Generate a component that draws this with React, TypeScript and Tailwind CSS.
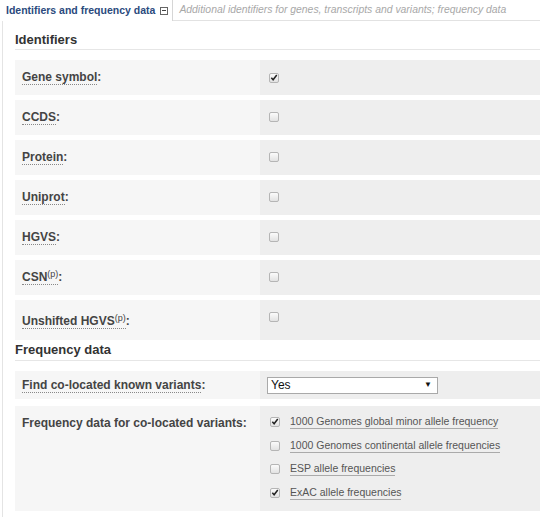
import React from 'react';

const Check: React.FC<{ checked?: boolean }> = ({ checked }) => (
  <span className="inline-flex h-[10px] w-[10px] items-center justify-center rounded-[2px] border border-[#b5b5b5] bg-gradient-to-b from-[#fbfbfb] to-[#e2e2e2]">
    {checked && (
      <svg width="9" height="9" viewBox="0 0 9 9" className="-mt-[1px]">
        <path d="M1.5 4.8 L3.5 7 L7.6 1.6" fill="none" stroke="#222" strokeWidth="1.7" />
      </svg>
    )}
  </span>
);

const Label: React.FC<{ text: string; sup?: boolean }> = ({ text, sup }) => (
  <span className="text-[12px] font-bold text-[#444]">
    <span className="border-b border-dotted border-[#888]">
      {text}
      {sup && <sup className="text-[9px] font-normal">(p)</sup>}
    </span>
    :
  </span>
);

const identifiers = [
  { text: 'Gene symbol', checked: true },
  { text: 'CCDS' },
  { text: 'Protein' },
  { text: 'Uniprot' },
  { text: 'HGVS' },
  { text: 'CSN', sup: true },
  { text: 'Unshifted HGVS', sup: true, tall: true },
];

const freqOptions = [
  { text: '1000 Genomes global minor allele frequency', checked: true },
  { text: '1000 Genomes continental allele frequencies' },
  { text: 'ESP allele frequencies' },
  { text: 'ExAC allele frequencies', checked: true },
];

export default function App() {
  return (
    <div className="h-[517px] w-[540px] overflow-hidden bg-white" style={{ fontFamily: '"Liberation Sans", Arial, sans-serif' }}>
      {/* tabs */}
      <div className="flex h-[21px] items-stretch">
        <div className="flex items-center gap-[5px] whitespace-nowrap border-r border-[#d6d6d6] pl-[6px] pr-[4px] text-[10.5px] font-bold text-[#2b4a7d]">
          <span>Identifiers and frequency data</span>
          <span className="inline-flex h-[8px] w-[8px] items-center justify-center border border-[#666] bg-white">
            <span className="h-[1px] w-[4px] bg-[#444]" />
          </span>
        </div>
        <div className="flex min-w-0 flex-1 items-center overflow-hidden whitespace-nowrap border-b border-[#e2e2e2] pl-[6px] text-[10.4px] italic text-[#a8a8a8]">
          Additional identifiers for genes, transcripts and variants; frequency data
        </div>
      </div>

      <div className="ml-[2px] h-full border-l border-[#e4e4e4] pl-[12px]">
        {/* Identifiers */}
        <div className="flex h-[29px] items-end border-b border-[#e6e6e6] pb-0 text-[13px] font-bold text-[#333]">
          Identifiers
        </div>
        <div className="mt-[10px] flex flex-col gap-[5px]">
          {identifiers.map((r) => (
            <div key={r.text} className={`grid grid-cols-[245px_1fr] ${r.tall ? 'h-[40px]' : 'h-[35px]'}`}>
              <div className={`bg-[#f6f6f6] pl-[7px] ${r.tall ? 'pt-[8px]' : 'pt-[4px]'}`}>
                <Label text={r.text} sup={r.sup} />
              </div>
              <div className="bg-[#eeeeee] pl-[9px] pt-[5px]">
                <Check checked={r.checked} />
              </div>
            </div>
          ))}
        </div>

        {/* Frequency data */}
        <div className="flex h-[21px] items-end border-b border-[#e6e6e6] pb-[1px] text-[13px] font-bold text-[#333]">
          Frequency data
        </div>
        <div className="mt-[10px] grid h-[28px] grid-cols-[245px_1fr]">
          <div className="flex items-center bg-[#f6f6f6] pl-[7px]">
            <Label text="Find co-located known variants" />
          </div>
          <div className="flex items-center bg-[#eeeeee] pl-[7px]">
            <div className="flex h-[17px] w-[171px] items-center justify-between border border-[#a9a9a9] bg-white pl-[3px] pr-[5px] text-[12px] text-[#111]">
              <span>Yes</span>
              <span className="text-[8px]">▼</span>
            </div>
          </div>
        </div>
        <div className="mt-[7px] grid h-[105px] grid-cols-[245px_1fr]">
          <div className="bg-[#f6f6f6] pl-[7px] pt-[8px] text-[12px] font-bold text-[#444]">
            Frequency data for co-located variants:
          </div>
          <div className="flex flex-col gap-[9.7px] bg-[#eeeeee] pl-[10px] pt-[9px]">
            {freqOptions.map((o) => (
              <div key={o.text} className="flex h-[14px] items-center gap-[10px]">
                <Check checked={o.checked} />
                <span className="border-b border-[#aaa] text-[10.5px] leading-[13px] text-[#555]">{o.text}</span>
              </div>
            ))}
          </div>
        </div>
      </div>
    </div>
  );
}
